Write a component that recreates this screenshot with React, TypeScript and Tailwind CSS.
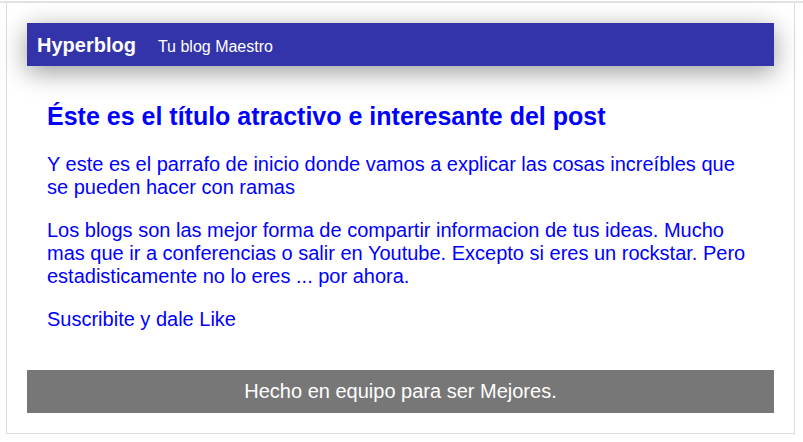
export default function App() {
  return (
    <div className="min-h-screen bg-white pt-px font-['Liberation_Sans',Arial,sans-serif]">
      <div className="border-t-2 border-[#e2e2e2]">
        <div className="ml-[6px] mr-[8px] border-x border-b border-[#dcdcdc] pt-5 pb-5">
          <header className="mx-5 flex h-[43px] items-center bg-[#3333aa] px-[10px] text-white shadow-[0_6px_26px_rgba(0,0,0,0.4)]">
            <div className="flex items-baseline gap-[22px]">
              <span className="text-[20px] font-bold">Hyperblog</span>
              <span className="text-[16px]">Tu blog Maestro</span>
            </div>
          </header>

          <main className="mx-5 px-5 pt-[36px] text-[#0000ff]">
            <h2 className="mb-[22px] text-[25px] font-bold leading-[1.15]">
              Éste es el título atractivo e interesante del post
            </h2>
            <p className="mb-5 text-[20px] leading-[1.15]">
              Y este es el parrafo de inicio donde vamos a explicar las cosas increíbles que se pueden hacer con ramas
            </p>
            <p className="mb-5 text-[20px] leading-[1.15]">
              Los blogs son las mejor forma de compartir informacion de tus ideas. Mucho mas que ir a conferencias o
              salir en Youtube. Excepto si eres un rockstar. Pero estadisticamente no lo eres ... por ahora.
            </p>
            <p className="text-[20px] leading-[1.15]">Suscribite y dale Like</p>
          </main>

          <footer className="mx-5 mt-[39px] flex h-[43px] items-center justify-center bg-[#777777] text-[20px] text-white">
            Hecho en equipo para ser Mejores.
          </footer>
        </div>
      </div>
    </div>
  );
}
